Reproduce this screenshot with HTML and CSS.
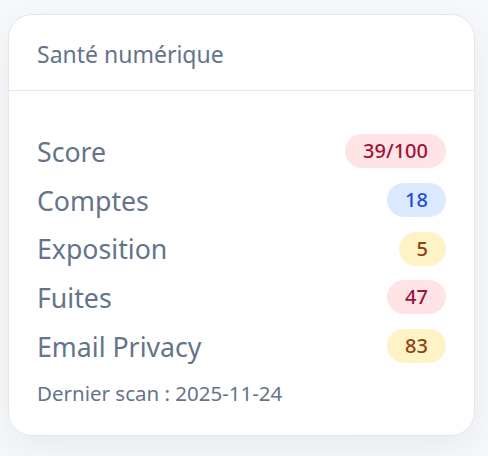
FILE: index.html
```html
<!DOCTYPE html>
<html>

<head>
    <meta charset='UTF-8'>
    <title>Santé numérique</title>
    <link rel="stylesheet" href="styles.css">
</head>

<body>
    <div class='health-card'>
        <div class='health-header'>Santé numérique</div>

        <div class='health-body'>
            <div class='health-row'>
                <span class='row-label'>Score</span>
                <span class='badge badge-red'>39/100</span>
            </div>
            <div class='health-row'>
                <span class='row-label'>Comptes</span>
                <span class='badge badge-blue'>18</span>
            </div>
            <div class='health-row'>
                <span class='row-label'>Exposition</span>
                <span class='badge badge-yellow'>5</span>
            </div>
            <div class='health-row'>
                <span class='row-label'>Fuites</span>
                <span class='badge badge-red'>47</span>
            </div>
            <div class='health-row'>
                <span class='row-label'>Email Privacy</span>
                <span class='badge badge-yellow'>83</span>
            </div>

            <div class='last-scan'>Dernier scan : 2025-11-24</div>
        </div>
    </div>
</body>

</html>
```

FILE: styles.css
```css
body {
    font-family: "Noto Sans", "Open Sans", sans-serif;
    margin: 0;
    padding: 14px 0 0 8px;
    background-color: #f7f8fa;
    min-height: 100vh;
    box-sizing: border-box;
}

.health-card {
    width: 467px;
    box-sizing: border-box;
    background: linear-gradient(90deg, #ffffff 70%, #fefeff);
    border: 1px solid #e2e8f0;
    border-radius: 24px;
    box-shadow: 0 12px 36px rgba(15, 23, 42, 0.06);
}

.health-header {
    height: 76px;
    padding: 3px 28px 0;
    box-sizing: border-box;
    display: flex;
    align-items: center;
    font-size: 23px;
    color: #64748b;
    border-bottom: 1px solid #e2e8f0;
}

.health-body {
    padding: 36px 28px 28px;
}

.health-row {
    display: flex;
    align-items: center;
    justify-content: space-between;
    height: 48.7px;
}

.row-label {
    font-size: 26.7px;
    color: #64748b;
}

.badge {
    display: inline-block;
    height: 34px;
    line-height: 34px;
    padding: 0 18px;
    border-radius: 17px;
    font-size: 20px;
    font-weight: 500;
}

.badge-red {
    background: #ffe4e6;
    color: #9f1239;
}

.badge-blue {
    background: #dbeafe;
    color: #1d4ed8;
}

.badge-yellow {
    background: #fef3c7;
    color: #92400e;
}

.last-scan {
    margin-top: 9px;
    font-size: 20.5px;
    color: #64748b;
}
```
